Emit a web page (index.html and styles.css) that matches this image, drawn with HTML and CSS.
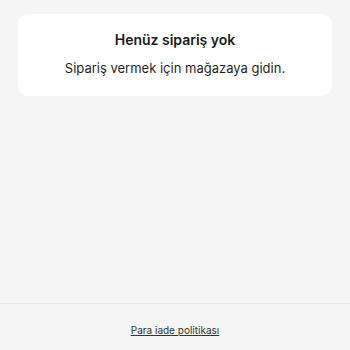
FILE: index.html
```html
<!DOCTYPE html>
<html lang="tr">
<head>
<meta charset="UTF-8">
<meta name="viewport" content="width=device-width, initial-scale=1.0">
<title>Siparişler</title>
<link rel="stylesheet" href="styles.css">
</head>
<body>
  <div class="page">
    <main class="content">
      <div class="empty-card">
        <h2>Henüz sipariş yok</h2>
        <p>Sipariş vermek için mağazaya gidin.</p>
      </div>
    </main>
    <footer class="footer">
      <a href="#">Para iade politikası</a>
    </footer>
  </div>
</body>
</html>
```

FILE: styles.css
```css
body {
    margin: 0;
    padding: 0;
    background-color: #f5f5f5;
    font-family: Inter, "Liberation Sans", Arial, sans-serif;
    color: #1a1a1a;
}
.page {
    display: flex;
    flex-direction: column;
    min-height: 350px;
}
.content {
    flex: 1;
    padding: 14px 18px;
}
.empty-card {
    background-color: #fff;
    border-radius: 10px;
    padding: 17px 16px 19px;
    text-align: center;
}
.empty-card h2 {
    margin: 0;
    font-size: 14px;
    font-weight: 600;
    line-height: 18px;
}
.empty-card p {
    margin: 11px 0 0;
    font-size: 13px;
    line-height: 17px;
    color: #1f1f1f;
}
.footer {
    border-top: 1px solid #e3e3e3;
    height: 47px;
    box-sizing: border-box;
    padding-top: 6px;
    display: flex;
    align-items: center;
    justify-content: center;
}
.footer a {
    font-size: 10px;
    color: #333;
    text-decoration: underline;
}
```
